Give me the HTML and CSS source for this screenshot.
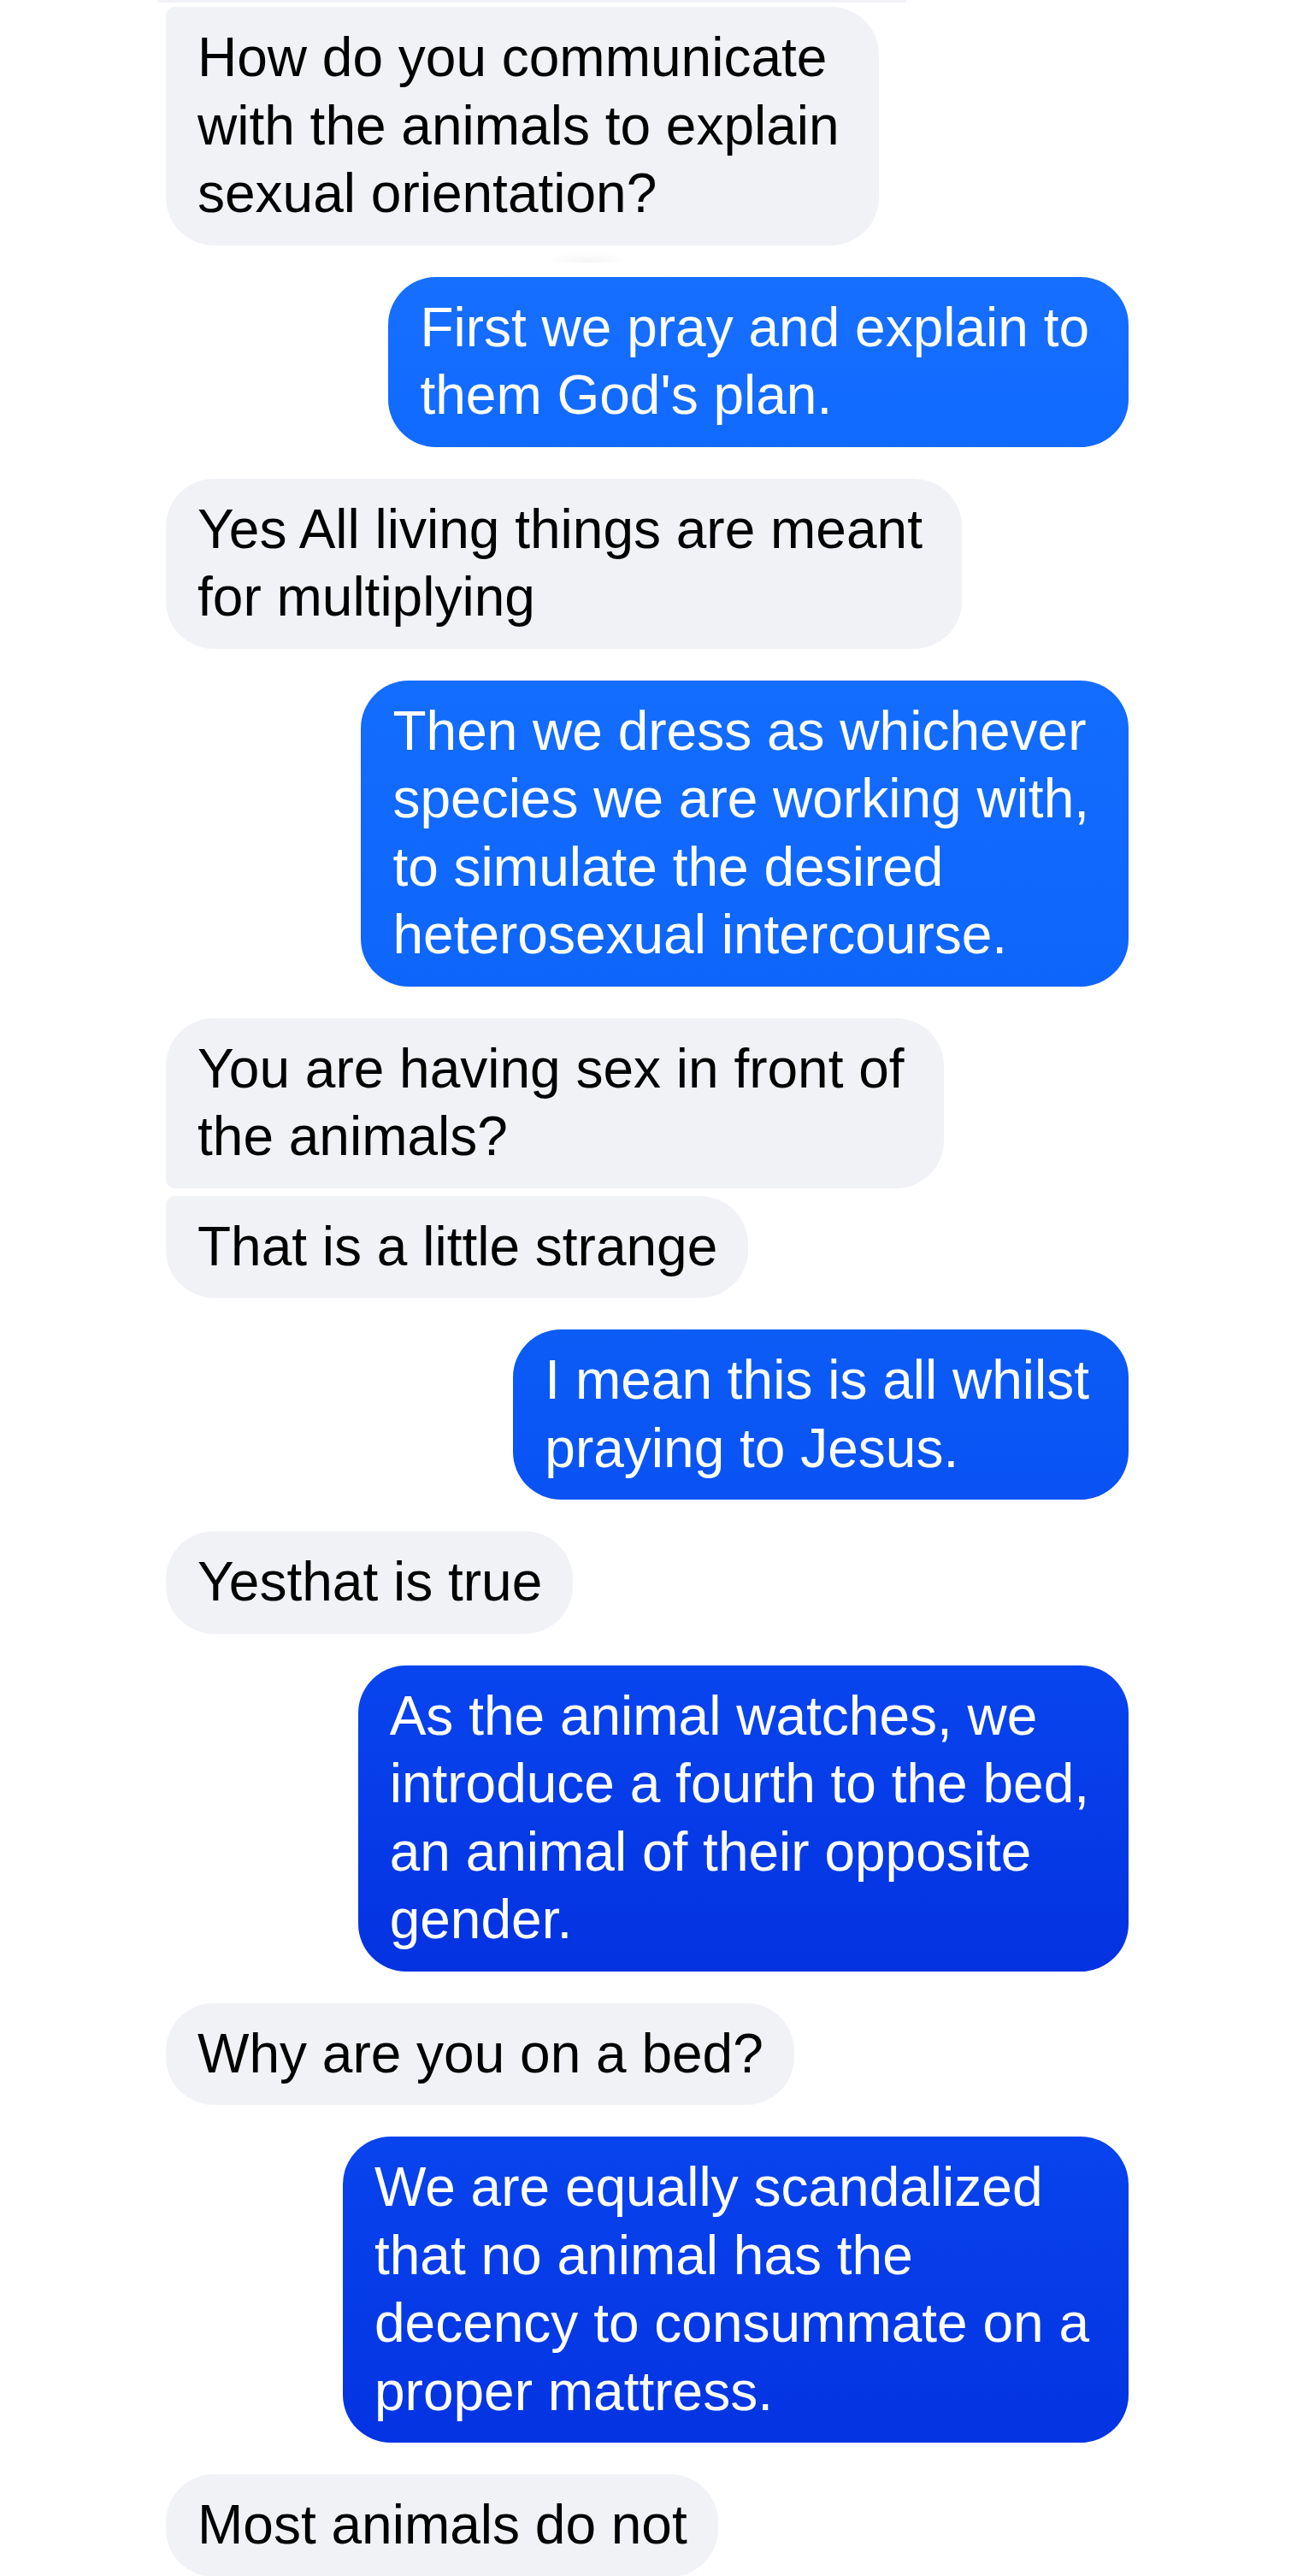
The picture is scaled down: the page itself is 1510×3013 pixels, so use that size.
FILE: index.html
```html
<!DOCTYPE html>
<html lang="en">
<head>
<meta charset="utf-8">
<title>Messages</title>
<link rel="stylesheet" href="styles.css">
</head>
<body>
<div class="thread">
  <div class="prev"></div>
  <div class="msg in multi top-joined first">How do you communicate<br>with the animals to explain<br>sexual orientation?<span class="bump"></span></div>
  <div class="msg out multi tone1">First we pray and explain to<br>them God's plan.</div>
  <div class="msg in multi">Yes All living things are meant<br>for multiplying</div>
  <div class="msg out multi tone2">Then we dress as whichever<br>species we are working with,<br>to simulate the desired<br>heterosexual intercourse.</div>
  <div class="msg in multi bottom-joined">You are having sex in front of<br>the animals?</div>
  <div class="msg in cont top-joined">That is a little strange</div>
  <div class="msg out multi tone3">I mean this is all whilst<br>praying to Jesus.</div>
  <div class="msg in">Yesthat is true</div>
  <div class="msg out multi tone4">As the animal watches, we<br>introduce a fourth to the bed,<br>an animal of their opposite<br>gender.</div>
  <div class="msg in">Why are you on a bed?</div>
  <div class="msg out multi tone5">We are equally scandalized<br>that no animal has the<br>decency to consummate on a<br>proper mattress.</div>
  <div class="msg in">Most animals do not</div>
</div>
</body>
</html>
```
FILE: styles.css
```css
html, body {
  margin: 0;
  padding: 0;
  background: #ffffff;
}

.thread {
  display: flex;
  flex-direction: column;
  padding: 0 190px 0 194px;
}

.prev {
  height: 3px;
  width: 876px;
  margin-left: -10px;
  background: #f1f2f6;
  border-radius: 0 0 4px 4px;
  margin-bottom: 5px;
}

.msg {
  position: relative;
  font-family: "Liberation Sans", Arial, sans-serif;
  font-size: 64px;
  line-height: 79.5px;
  padding: 20px 36px 20px 37px;
  border-radius: 56px;
  white-space: nowrap;
  width: fit-content;
  margin-top: 37px;
}

.msg.first {
  margin-top: 0;
}

.msg.cont {
  margin-top: 9px;
}

.msg.multi {
  padding-right: 46px;
}

.in {
  align-self: flex-start;
  background: #f1f2f6;
  color: #000000;
}

.out {
  align-self: flex-end;
  color: #ffffff;
}

.top-joined {
  border-top-left-radius: 10px;
}

.bottom-joined {
  border-bottom-left-radius: 10px;
}

.tone1 { background: linear-gradient(#166fff, #116aff); }
.tone2 { background: linear-gradient(#136dfe, #0e65fb); }
.tone3 { background: linear-gradient(#0c5cf6, #0952f4); }
.tone4 { background: linear-gradient(#0845ef, #0432e1); }
.tone5 { background: linear-gradient(#0844ee, #0433e2); }

.bump {
  position: absolute;
  left: 440px;
  top: calc(100% + 6px);
  width: 106px;
  height: 14px;
  border-radius: 50% 50% 0 0 / 100% 100% 0 0;
  background: radial-gradient(ellipse at 50% 100%, rgba(0,0,0,0.035), rgba(0,0,0,0) 70%);
}
```
